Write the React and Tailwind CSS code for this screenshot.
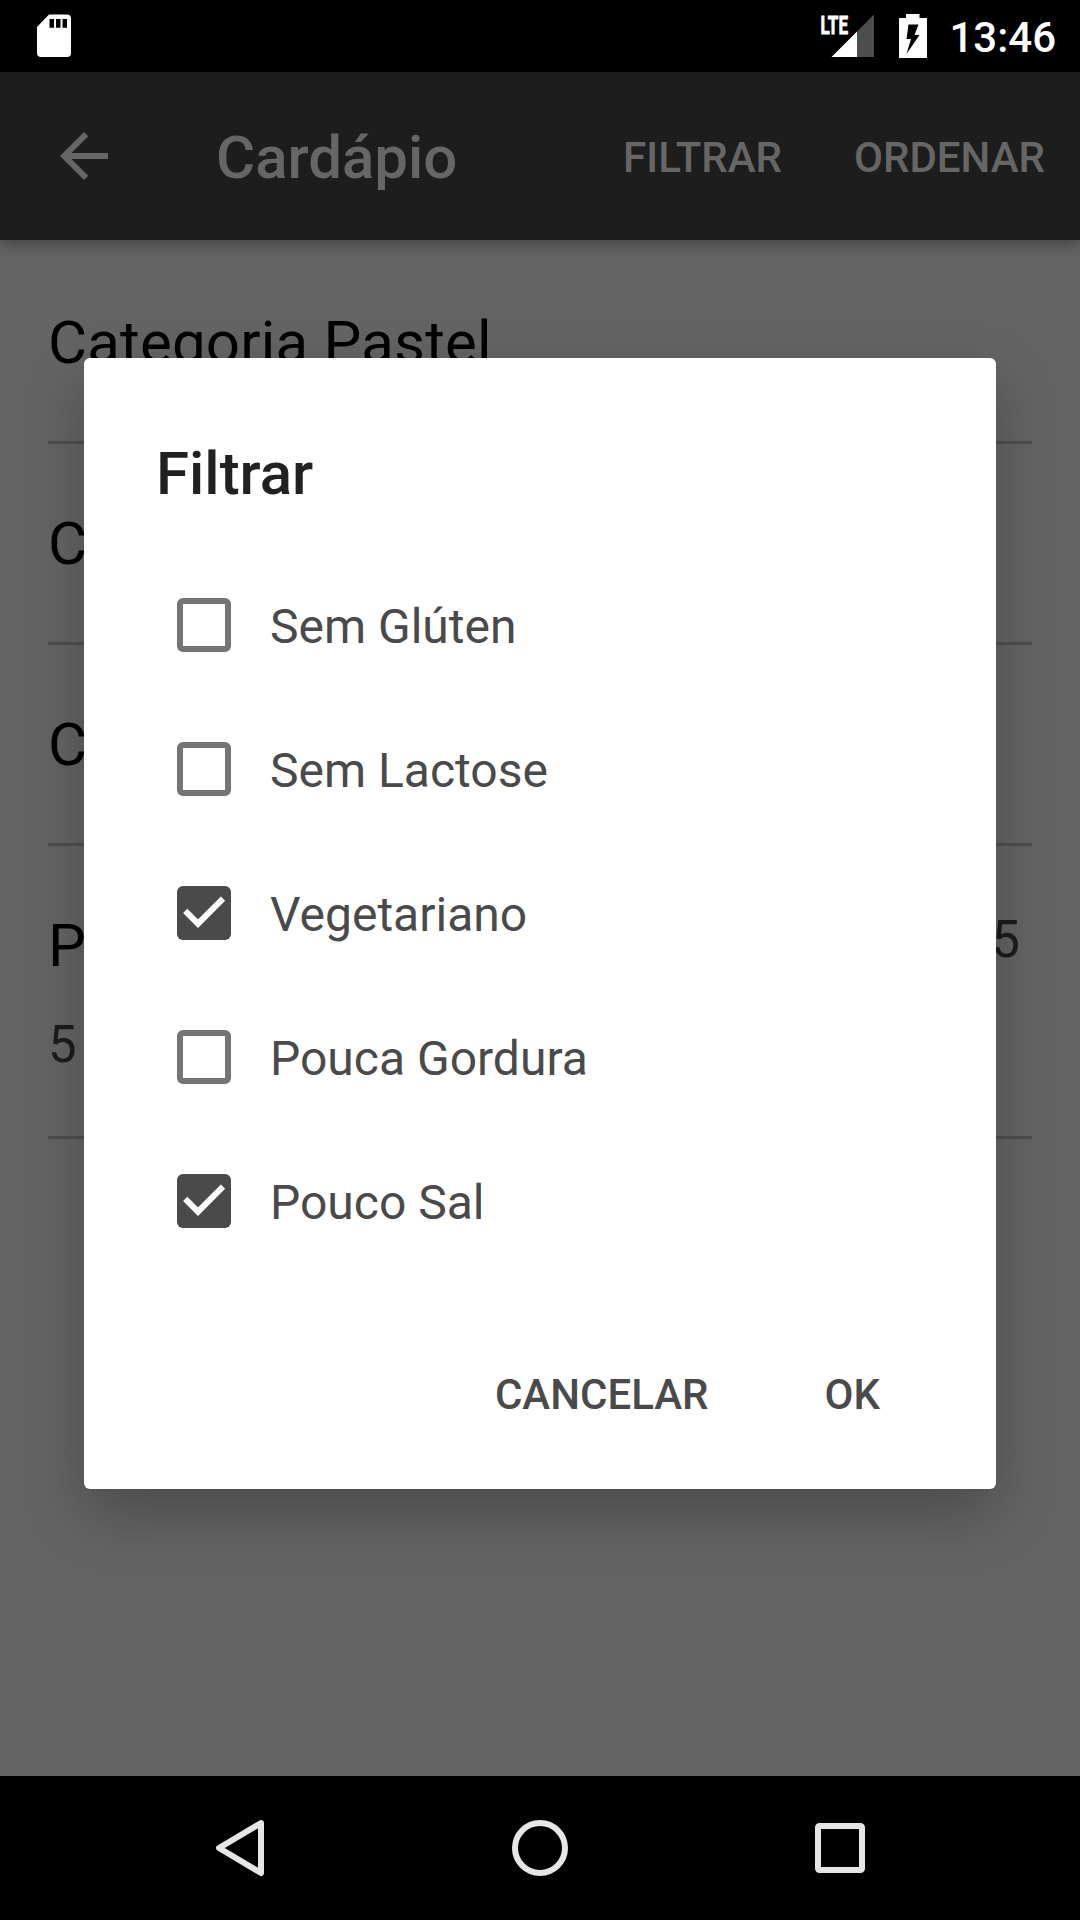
const CATEGORIES = [
  { id: 1, name: "Categoria Pastel" },
  { id: 2, name: "C" },
  { id: 3, name: "C" },
];

const OPTIONS = [
  { label: "Sem Glúten", checked: false },
  { label: "Sem Lactose", checked: false },
  { label: "Vegetariano", checked: true },
  { label: "Pouca Gordura", checked: false },
  { label: "Pouco Sal", checked: true },
];

function StatusBar() {
  return (
    <div className="flex h-[72px] items-center justify-between bg-black pl-[37px] pr-[24px]">
      <svg width="34" height="44" viewBox="0 0 34 44" fill="#fff">
        <path
          fillRule="evenodd"
          d="M12 0.5H30a4 4 0 0 1 4 4V39a4 4 0 0 1-4 4H4a4 4 0 0 1-4-4V13zM12.500 5v8.700h4.500V5zM19 5v8.700h4.500V5zM25.500 5v8.700h4.500V5z"
        />
      </svg>
      <div className="flex items-center">
        <svg width="60" height="72" viewBox="-6 -14 60 72">
          <path d="M54 0.500V43H37V17.500z" fill="#4d4d4d" />
          <path d="M37 17.500V43H11.500z" fill="#fff" />
          <text
            x="0.500"
            y="19.500"
            fill="#fff"
            stroke="#fff"
            strokeWidth="0.800"
            fontFamily="Roboto, sans-serif"
            fontWeight="700"
            fontSize="26.500"
            textLength="27.500"
            lengthAdjust="spacingAndGlyphs"
          >
            LTE
          </text>
        </svg>
        <svg className="ml-[25px]" width="28" height="44" viewBox="0 0 28 44">
          <path d="M7 0H20.500V4H28V44H0V4H7z" fill="#fff" />
          <path d="M9.500 10.500H19.500L15.500 21H20.500L7.500 40L12 25H7.500z" fill="#000" />
        </svg>
        <span className="ml-[22px] pt-[3px] text-[42px] font-medium leading-[48px] text-white">13:46</span>
      </div>
    </div>
  );
}

function Toolbar() {
  return (
    <div className="relative z-10 flex h-[168px] items-center bg-[#1d1d1d] font-medium text-[#666] shadow-[0_4px_14px_rgba(0,0,0,0.35)]">
      <svg className="ml-[48px]" width="72" height="72" viewBox="0 0 24 24" fill="#666">
        <path d="M20 11H7.830l5.590-5.590L12 4l-8 8 8 8 1.410-1.410L7.830 13H20v-2z" />
      </svg>
      <span className="ml-[96px] pt-[4px] text-[60px] leading-[72px]">Cardápio</span>
      <div className="ml-auto flex gap-[72px] pr-[35px] pt-[2px] text-[42px]">
        <span>FILTRAR</span>
        <span>ORDENAR</span>
      </div>
    </div>
  );
}

function MenuList() {
  return (
    <div className="h-[1536px] bg-[#646464] px-[48px] pt-[3px]">
      {CATEGORIES.map(({ id, name }) => (
        <div
          key={id}
          className="flex h-[201px] items-center border-b-[3px] border-[#4f4f4f] pt-[2px] text-[60px] tracking-[0.2px] text-black"
        >
          {name}
        </div>
      ))}
      <div className="flex h-[293px] justify-between border-b-[3px] border-[#4f4f4f] pt-[64px]">
        <div className="flex flex-col">
          <span className="text-[60px] leading-[72px] text-black">P</span>
          <span className="mt-[33px] text-[51px] leading-[60px] text-[#1c1c1c]">5</span>
        </div>
        <span className="pr-[12px] text-[51px] leading-[60px] text-[#1c1c1c]">5</span>
      </div>
    </div>
  );
}

function Checkbox({ checked }) {
  if (!checked) {
    return <span className="size-[54px] rounded-[6px] border-[6px] border-[#757575]" />;
  }
  return (
    <svg className="size-[54px] rounded-[6px] bg-[#4a4a4a]" viewBox="0 0 54 54">
      <path d="M8.200 24.800L21 37.700L46 12.700" fill="none" stroke="#fff" strokeWidth="6" />
    </svg>
  );
}

function FilterDialog() {
  return (
    <div className="absolute left-[84px] top-[358px] z-20 flex h-[1131px] w-[912px] flex-col rounded-[6px] bg-white shadow-[0_24px_62px_rgba(0,0,0,0.26)]">
      <h2 className="pl-[72px] pt-[80px] text-[60px] font-medium leading-[72px] text-[#212121]">Filtrar</h2>
      <ul className="mt-[43px] pl-[93px]">
        {OPTIONS.map((option) => (
          <li key={option.label} className="flex h-[144px] items-center gap-[39px]">
            <Checkbox checked={option.checked} />
            <span className="pt-[4px] text-[48px] leading-[56px] text-[#4a4a4a]">{option.label}</span>
          </li>
        ))}
      </ul>
      <div className="mt-[98px] flex justify-end gap-[116px] pr-[116px] text-[42px] font-medium leading-[48px] text-[#4a4a4a]">
        <span>CANCELAR</span>
        <span>OK</span>
      </div>
    </div>
  );
}

function NavigationBar() {
  return (
    <div className="relative z-30 flex h-[144px] items-center justify-center gap-[228px] bg-black">
      <svg width="72" height="72" viewBox="0 0 72 72" fill="none" stroke="#e6e6e6" strokeWidth="6" strokeLinejoin="round">
        <path d="M57 11L15 36L57 61z" />
      </svg>
      <svg width="72" height="72" viewBox="0 0 72 72" fill="none" stroke="#e6e6e6" strokeWidth="6">
        <circle cx="36" cy="36" r="25" />
      </svg>
      <svg width="72" height="72" viewBox="0 0 72 72" fill="none" stroke="#e6e6e6" strokeWidth="6">
        <rect x="14" y="14" width="44" height="44" rx="1.500" />
      </svg>
    </div>
  );
}

export default function App() {
  return (
    <div className="relative h-[1920px] w-[1080px] overflow-hidden bg-black font-[Roboto,sans-serif]">
      <StatusBar />
      <Toolbar />
      <MenuList />
      <FilterDialog />
      <NavigationBar />
    </div>
  );
}
